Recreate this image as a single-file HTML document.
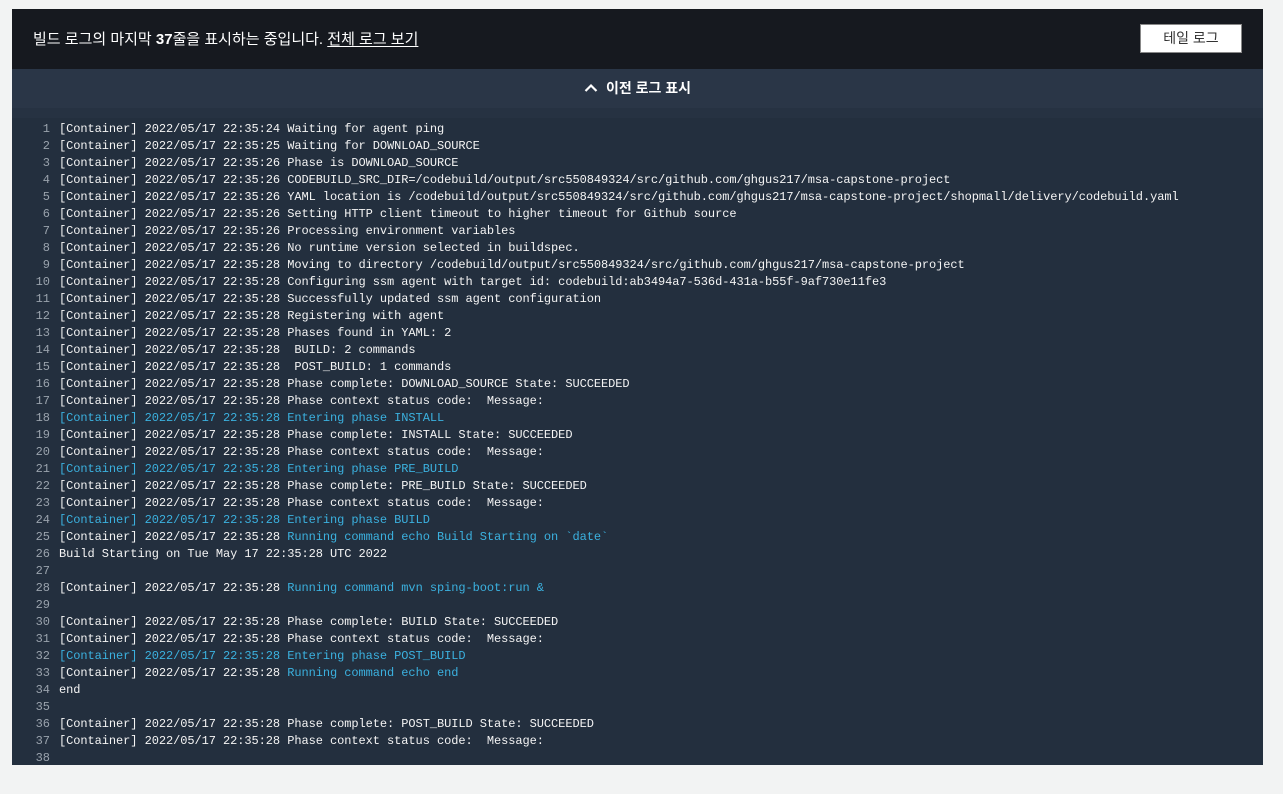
<!DOCTYPE html>
<html><head><meta charset="utf-8"><style>
body{margin:0;background:#f2f3f3;width:1283px;height:794px;overflow:hidden;font-family:"Liberation Sans","Noto Sans CJK KR",sans-serif}
.panel{position:absolute;left:12px;top:9px;width:1251px;height:756px;background:#232f3e}
.top{height:60px;background:#16191f;position:relative}
.top .msg{position:absolute;left:21px;top:19px;color:#fff;font-size:15px}
.top .msg b{font-weight:bold}
.top .msg u{text-underline-offset:2px}
.btn{position:absolute;left:1128px;top:15px;width:100px;height:27px;background:#fff;border:1px solid #888;color:#333;font-size:14px;text-align:center;line-height:27px}
.prev{height:39px;background:#2a3647;color:#fff;font-size:14px;font-weight:bold;text-align:center;line-height:39px}
.band{height:10px;background:#263242}
.log{font-family:"Liberation Mono",monospace;font-size:12px;line-height:17px;color:#f4f4f4;padding-top:3px;letter-spacing:-0.07px}
.l{display:flex;height:17px;white-space:pre}
.n{width:38px;text-align:right;color:#9aa3ad;padding-right:9px;letter-spacing:0}
.c{color:#3bb1df}
</style></head><body>
<div class="panel">
<div class="top"><div class="msg">빌드 로그의 마지막 <b>37</b>줄을 표시하는 중입니다. <u>전체 로그 보기</u></div><div class="btn">테일 로그</div></div>
<div class="prev"><svg width="14" height="10" viewBox="0 0 14 10" style="vertical-align:0;margin-right:8px"><path d="M1.5 8 L7 2.5 L12.5 8" stroke="#fff" stroke-width="2.2" fill="none"/></svg>이전 로그 표시</div>
<div class="band"></div>
<div class="log">
<div class="l"><span class="n">1</span>[Container] 2022/05/17 22:35:24 Waiting for agent ping</div>
<div class="l"><span class="n">2</span>[Container] 2022/05/17 22:35:25 Waiting for DOWNLOAD_SOURCE</div>
<div class="l"><span class="n">3</span>[Container] 2022/05/17 22:35:26 Phase is DOWNLOAD_SOURCE</div>
<div class="l"><span class="n">4</span>[Container] 2022/05/17 22:35:26 CODEBUILD_SRC_DIR=/codebuild/output/src550849324/src/github.com/ghgus217/msa-capstone-project</div>
<div class="l"><span class="n">5</span>[Container] 2022/05/17 22:35:26 YAML location is /codebuild/output/src550849324/src/github.com/ghgus217/msa-capstone-project/shopmall/delivery/codebuild.yaml</div>
<div class="l"><span class="n">6</span>[Container] 2022/05/17 22:35:26 Setting HTTP client timeout to higher timeout for Github source</div>
<div class="l"><span class="n">7</span>[Container] 2022/05/17 22:35:26 Processing environment variables</div>
<div class="l"><span class="n">8</span>[Container] 2022/05/17 22:35:26 No runtime version selected in buildspec.</div>
<div class="l"><span class="n">9</span>[Container] 2022/05/17 22:35:28 Moving to directory /codebuild/output/src550849324/src/github.com/ghgus217/msa-capstone-project</div>
<div class="l"><span class="n">10</span>[Container] 2022/05/17 22:35:28 Configuring ssm agent with target id: codebuild:ab3494a7-536d-431a-b55f-9af730e11fe3</div>
<div class="l"><span class="n">11</span>[Container] 2022/05/17 22:35:28 Successfully updated ssm agent configuration</div>
<div class="l"><span class="n">12</span>[Container] 2022/05/17 22:35:28 Registering with agent</div>
<div class="l"><span class="n">13</span>[Container] 2022/05/17 22:35:28 Phases found in YAML: 2</div>
<div class="l"><span class="n">14</span>[Container] 2022/05/17 22:35:28  BUILD: 2 commands</div>
<div class="l"><span class="n">15</span>[Container] 2022/05/17 22:35:28  POST_BUILD: 1 commands</div>
<div class="l"><span class="n">16</span>[Container] 2022/05/17 22:35:28 Phase complete: DOWNLOAD_SOURCE State: SUCCEEDED</div>
<div class="l"><span class="n">17</span>[Container] 2022/05/17 22:35:28 Phase context status code:  Message:</div>
<div class="l"><span class="n">18</span><span class="c">[Container] 2022/05/17 22:35:28 Entering phase INSTALL</span></div>
<div class="l"><span class="n">19</span>[Container] 2022/05/17 22:35:28 Phase complete: INSTALL State: SUCCEEDED</div>
<div class="l"><span class="n">20</span>[Container] 2022/05/17 22:35:28 Phase context status code:  Message:</div>
<div class="l"><span class="n">21</span><span class="c">[Container] 2022/05/17 22:35:28 Entering phase PRE_BUILD</span></div>
<div class="l"><span class="n">22</span>[Container] 2022/05/17 22:35:28 Phase complete: PRE_BUILD State: SUCCEEDED</div>
<div class="l"><span class="n">23</span>[Container] 2022/05/17 22:35:28 Phase context status code:  Message:</div>
<div class="l"><span class="n">24</span><span class="c">[Container] 2022/05/17 22:35:28 Entering phase BUILD</span></div>
<div class="l"><span class="n">25</span>[Container] 2022/05/17 22:35:28 <span class="c">Running command echo Build Starting on `date`</span></div>
<div class="l"><span class="n">26</span>Build Starting on Tue May 17 22:35:28 UTC 2022</div>
<div class="l"><span class="n">27</span></div>
<div class="l"><span class="n">28</span>[Container] 2022/05/17 22:35:28 <span class="c">Running command mvn sping-boot:run &amp;</span></div>
<div class="l"><span class="n">29</span></div>
<div class="l"><span class="n">30</span>[Container] 2022/05/17 22:35:28 Phase complete: BUILD State: SUCCEEDED</div>
<div class="l"><span class="n">31</span>[Container] 2022/05/17 22:35:28 Phase context status code:  Message:</div>
<div class="l"><span class="n">32</span><span class="c">[Container] 2022/05/17 22:35:28 Entering phase POST_BUILD</span></div>
<div class="l"><span class="n">33</span>[Container] 2022/05/17 22:35:28 <span class="c">Running command echo end</span></div>
<div class="l"><span class="n">34</span>end</div>
<div class="l"><span class="n">35</span></div>
<div class="l"><span class="n">36</span>[Container] 2022/05/17 22:35:28 Phase complete: POST_BUILD State: SUCCEEDED</div>
<div class="l"><span class="n">37</span>[Container] 2022/05/17 22:35:28 Phase context status code:  Message:</div>
<div class="l"><span class="n">38</span></div>
</div>
</div>
</body></html>
